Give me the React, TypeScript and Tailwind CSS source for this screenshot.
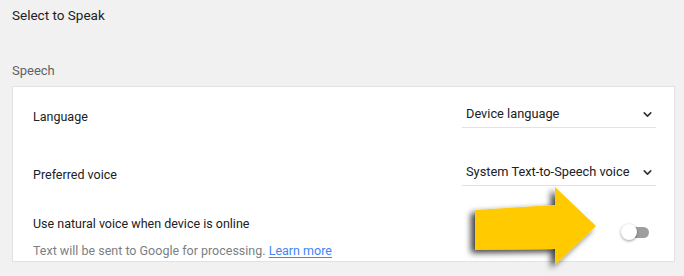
import { ChevronDown } from "lucide-react";

function Dropdown({ value }: { value: string }) {
  return (
    <div className="w-[194px] flex items-center justify-between border-b border-[#e3e3e3] pl-1 pr-0.5 pb-[3px] text-[12.8px] text-[#202124]">
      <span>{value}</span>
      <ChevronDown size={13} strokeWidth={3} className="text-[#333]" />
    </div>
  );
}

export default function App() {
  return (
    <div className="relative w-[684px] h-[276px] bg-[#f1f1f1] overflow-hidden font-['Roboto',sans-serif] text-[#202124]">
      <div className="px-3">
        <h1 className="pt-[6px] text-[13.5px] leading-[18px]">Select to Speak</h1>
        <h2 className="mt-[38px] text-[13px] leading-[18px] text-[#5f6368]">Speech</h2>

        <div className="mt-[6px] w-[663px] h-[176px] bg-white border border-[#e2e2e2]">
          {/* Language */}
          <div className="h-[58px] flex items-center justify-between pl-5 pr-[18px]">
            <span className="text-[12.5px] pt-[2px]">Language</span>
            <Dropdown value="Device language" />
          </div>

          {/* Preferred voice */}
          <div className="h-[58px] flex items-center justify-between pl-5 pr-[18px]">
            <span className="text-[12.5px] pt-[2px]">Preferred voice</span>
            <Dropdown value="System Text-to-Speech voice" />
          </div>

          {/* Natural voice */}
          <div className="flex justify-between pl-5 pr-[25px] pt-[12px]">
            <div>
              <p className="text-[12.5px] leading-[18px]">Use natural voice when device is online</p>
              <p className="mt-[9px] text-[12.5px] leading-[18px] text-[#7b7f84]">
                Text will be sent to Google for processing.{" "}
                <a className="text-[#4285f4] underline underline-offset-2">Learn more</a>
              </p>
            </div>
            <div className="relative w-[28px] h-[16px] mt-[9px] flex items-center">
              <div className="absolute right-0 w-[22px] h-[11px] rounded-full bg-[#9e9e9e]" />
              <div className="absolute left-0 w-[16px] h-[16px] rounded-full bg-white shadow-[0_1px_3px_rgba(0,0,0,0.4)]" />
            </div>
          </div>
        </div>
      </div>

      {/* callout arrow */}
      <svg className="absolute left-0 top-0" width="684" height="276" viewBox="0 0 684 276">
        <defs>
          <filter id="arrowShadow" x="-20%" y="-20%" width="140%" height="140%">
            <feDropShadow dx="-4" dy="3" stdDeviation="3" floodColor="#000" floodOpacity="0.75" />
          </filter>
        </defs>
        <polygon
          points="475,210 555,205 555,187 596,226 555,265 555,249 475,250"
          fill="#ffcb05"
          filter="url(#arrowShadow)"
        />
      </svg>
    </div>
  );
}
